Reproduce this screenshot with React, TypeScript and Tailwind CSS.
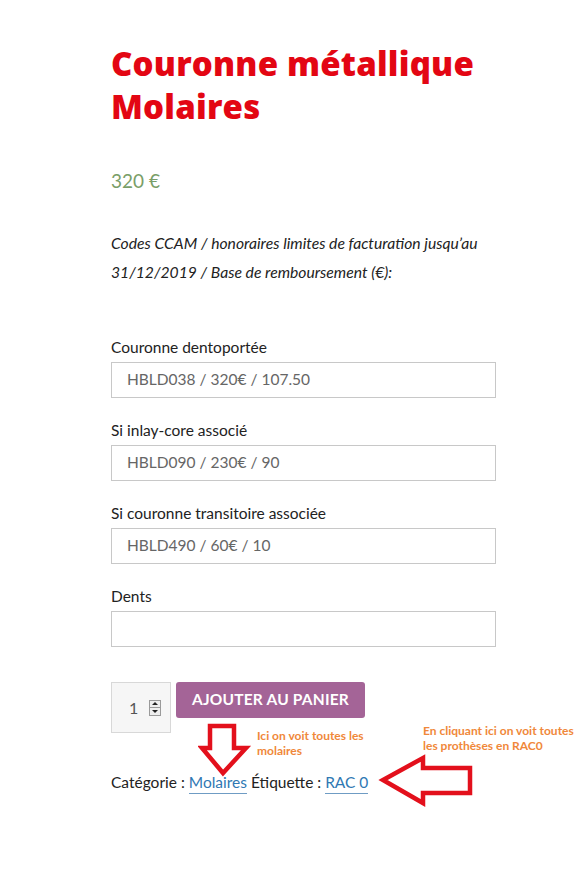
const body = { fontFamily: "Lato, 'Open Sans', sans-serif" };

function Field({ label, value }: { label: string; value?: string }) {
  return (
    <div>
      <label className="block text-[15.5px] leading-[24px] text-[#222] mb-[3px]">{label}</label>
      <div className="h-[36px] w-full border border-[#c8c8c8] bg-white px-[15px] flex items-center text-[15.5px] text-[#666]">
        {value}
      </div>
    </div>
  );
}

function DownArrow() {
  return (
    <svg width="54" height="62" viewBox="0 0 54 62" className="absolute left-[198px] top-[720px]">
      <path
        d="M12 6 H36 V28 H48 L25 53 L4 28 H12 Z"
        fill="none"
        stroke="#e3101c"
        strokeWidth="4.5"
        strokeLinejoin="miter"
      />
    </svg>
  );
}

function LeftArrow() {
  return (
    <svg width="100" height="56" viewBox="0 0 100 56" className="absolute left-[376px] top-[752px]">
      <path
        d="M7 28 L47 6 V16 H94 V41 H47 V51 Z"
        fill="none"
        stroke="#e3101c"
        strokeWidth="4.5"
        strokeLinejoin="miter"
      />
    </svg>
  );
}

export default function App() {
  return (
    <div className="relative w-[578px] h-[870px] bg-white" style={body}>
      <div className="pl-[111px] pt-[42px] w-[496px]">
        <h1
          className="text-[33px] leading-[43px] font-extrabold text-[#e30613] tracking-[0.2px]"
          style={{ fontFamily: "'Open Sans', sans-serif" }}
        >
          Couronne métallique
          <br />
          Molaires
        </h1>
        <p className="mt-[41px] text-[19px] leading-[24px] text-[#7a9e68]">320 €</p>
        <p className="mt-[36px] italic text-[15.7px] leading-[29px] text-[#222]">
          Codes CCAM / honoraires limites de facturation jusqu’au
          <br />
          31/12/2019 / Base de remboursement (€):
        </p>

        <div className="mt-[48px] flex flex-col gap-[20px]">
          <Field label="Couronne dentoportée" value="HBLD038 / 320€ / 107.50" />
          <Field label="Si inlay-core associé" value="HBLD090 / 230€ / 90" />
          <Field label="Si couronne transitoire associée" value="HBLD490 / 60€ / 10" />
          <Field label="Dents" />
        </div>

        <div className="mt-[35px] flex gap-[5px] items-start">
          <div className="w-[60px] h-[51px] border border-[#d8d8d8] bg-[#f6f6f6] flex items-center pl-[17px] gap-[11px]">
            <span className="text-[16px] text-[#555]">1</span>
            <div className="w-[12px] h-[16px] border border-[#9a9a9a] bg-[#eee] flex flex-col">
              <div className="flex-1 flex items-center justify-center border-b border-[#9a9a9a]">
                <div className="w-0 h-0 border-l-[3px] border-r-[3px] border-b-[3px] border-l-transparent border-r-transparent border-b-[#222]" />
              </div>
              <div className="flex-1 flex items-center justify-center">
                <div className="w-0 h-0 border-l-[3px] border-r-[3px] border-t-[3px] border-l-transparent border-r-transparent border-t-[#222]" />
              </div>
            </div>
          </div>
          <button className="h-[36px] w-[189px] rounded-[3px] bg-[#a46497] text-white font-bold text-[15.5px] tracking-[0.2px]">
            AJOUTER AU PANIER
          </button>
        </div>

        <p className="mt-[37px] text-[15.5px] leading-[24px] text-[#222]">
          Catégorie :{" "}
          <a className="text-[#2f78b3] border-b border-[#6f9cc4] pb-[2px]">Molaires</a> Étiquette :{" "}
          <a className="text-[#2f78b3] border-b border-[#6f9cc4] pb-[2px]">RAC 0</a>
        </p>
      </div>

      <DownArrow />
      <LeftArrow />

      <div className="absolute left-[257px] top-[728px] text-[12px] leading-[15px] font-bold text-[#f0883a]">
        Ici on voit toutes les
        <br />
        molaires
      </div>
      <div className="absolute left-[423px] top-[723px] text-[12px] leading-[15px] font-bold text-[#f0883a]">
        En cliquant ici on voit toutes
        <br />
        les prothèses en RAC0
      </div>
    </div>
  );
}
